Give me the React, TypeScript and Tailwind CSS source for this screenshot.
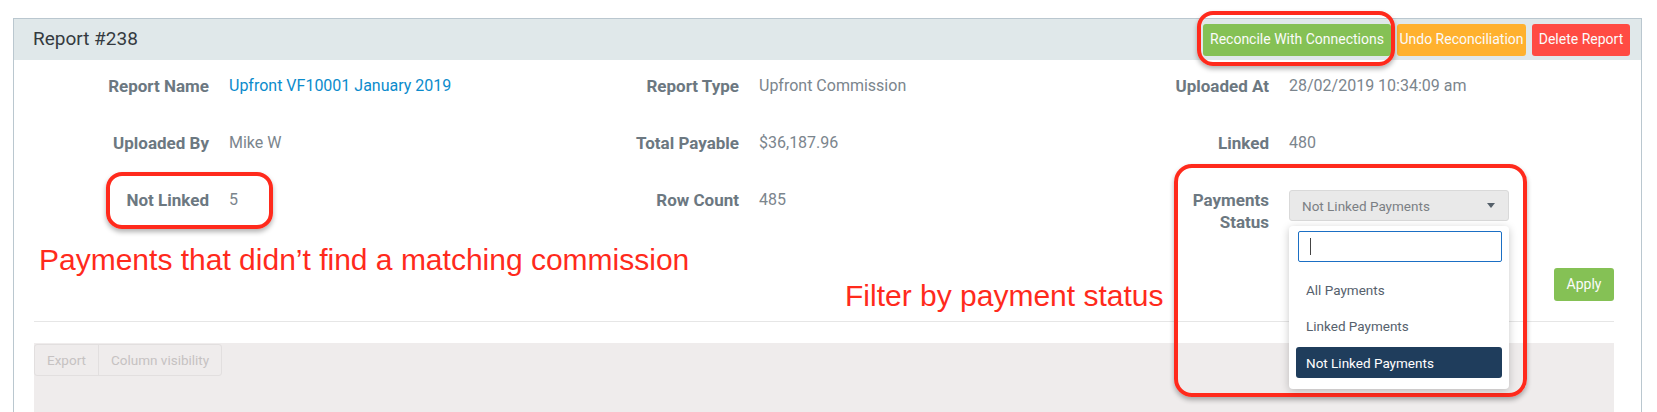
import React from 'react';

const details = [
  { label: 'Report Name', value: 'Upfront VF10001 January 2019', link: true },
  { label: 'Report Type', value: 'Upfront Commission' },
  { label: 'Uploaded At', value: '28/02/2019 10:34:09 am' },
  { label: 'Uploaded By', value: 'Mike W' },
  { label: 'Total Payable', value: '$36,187.96' },
  { label: 'Linked', value: '480' },
  { label: 'Not Linked', value: '5' },
  { label: 'Row Count', value: '485' },
];

const options = ['All Payments', 'Linked Payments'];

const App = () => {
  return (
    <div className="relative h-[412px] w-full overflow-hidden bg-white pl-[13px] pt-[18px] font-['Roboto',sans-serif]">
      <div className="h-[420px] w-[1629px] border border-b-0 border-[#bac7cf]">
        {/* header */}
        <div className="flex h-[41px] items-center justify-between bg-[#e0e8ea] pl-[19px] pr-[11px]">
          <h1 className="text-[19px] text-[#343a40]">Report #238</h1>
          <div className="flex items-center gap-[6px] text-[14px] font-normal text-[#fbfbfb]">
            <button className="h-[32px] w-[188px] rounded-[3px] bg-[#85c155]">Reconcile With Connections</button>
            <button className="h-[32px] w-[129px] rounded-[3px] bg-[#ffb12e]">Undo Reconciliation</button>
            <button className="h-[32px] w-[98px] rounded-[3px] bg-[#ff4b43]">Delete Report</button>
          </div>
        </div>

        {/* body */}
        <div className="pl-[20px] pr-[27px] pt-[15px]">
          <div className="grid grid-cols-[530px_530px_1fr] gap-y-[35px] text-[16px] leading-[22px]">
            {details.map((d) => (
              <div key={d.label} className="flex">
                <div className="w-[175px] shrink-0 text-right text-[17px] font-bold text-[#6c7881]">{d.label}</div>
                <div className={`ml-[20px] ${d.link ? 'text-[#0b8bcc]' : 'text-[#7b858d]'}`}>{d.value}</div>
              </div>
            ))}
            <div className="flex">
              <div className="w-[175px] shrink-0 text-right text-[17px] font-bold text-[#6c7881]">
                Payments
                <br />
                Status
              </div>
              <div className="relative ml-[20px] mt-[1px]">
                <div className="flex h-[31px] w-[220px] items-center justify-between rounded-[3px] border border-[#d9d9d9] bg-[#e9e9e9] pl-[12px] pr-[13px] text-[13.5px] text-[#7b7f84]">
                  <span>Not Linked Payments</span>
                  <svg width="8" height="5" viewBox="0 0 8 5">
                    <path d="M0 0 L8 0 L4 5 Z" fill="#55606a" />
                  </svg>
                </div>
                {/* open dropdown */}
                <div className="absolute left-0 top-[36px] z-20 w-[220px] rounded-[4px] bg-white pb-[11px] pl-[9px] pr-[7px] pt-[5px] shadow-[0_2px_8px_rgba(0,0,0,0.22)]">
                  <div className="flex h-[31px] items-center rounded-[2px] border border-[#1b6fc4] px-[11px]">
                    <div className="h-[17px] w-[1px] bg-[#444]" />
                  </div>
                  <div className="mt-[10px] text-[13.5px] text-[#56616d]">
                    {options.map((o) => (
                      <div key={o} className="flex h-[36px] items-center pl-[8px]">{o}</div>
                    ))}
                    <div className="-ml-[2px] mt-[3px] flex h-[31px] items-center rounded-[3px] bg-[#1f3d5c] pl-[10px] text-white">
                      Not Linked Payments
                    </div>
                  </div>
                </div>
              </div>
            </div>
          </div>

          <div className="mt-[35px] flex justify-end">
            <button className="h-[33px] w-[60px] rounded-[3px] bg-[#85c155] text-[14px] text-[#fbfbfb]">Apply</button>
          </div>

          <div className="mt-[20px] border-t border-[#e6e6e6]" />

          <div className="mt-[21px] h-[80px] bg-[#efecec] pt-[1px]">
            <div className="flex h-[32px] w-fit rounded-[3px] border border-[#e2dfdf] text-[13.5px] text-[#c6c2c2]">
              <div className="flex items-center px-[12px]">Export</div>
              <div className="flex items-center border-l border-[#e2dfdf] px-[12px]">Column visibility</div>
            </div>
          </div>
        </div>
      </div>

      {/* annotations */}
      <div className="absolute left-[1197px] top-[11px] h-[55px] w-[198px] rounded-[16px] border-[4px] border-[#ff2a1c] shadow-[0_3px_5px_rgba(0,0,0,0.3)]" />
      <div className="absolute left-[106px] top-[172px] h-[57px] w-[167px] rounded-[16px] border-[4px] border-[#ff2a1c] shadow-[0_3px_5px_rgba(0,0,0,0.3)]" />
      <div className="absolute left-[1174px] top-[164px] h-[233px] w-[353px] rounded-[18px] border-[4px] border-[#ff2a1c] shadow-[0_3px_5px_rgba(0,0,0,0.3)]" />
      <div className="absolute left-[39px] top-[244px] text-[30px] leading-[32px] text-[#ff2a1c] font-['Liberation_Sans',sans-serif]">
        Payments that didn’t find a matching commission
      </div>
      <div className="absolute left-[845px] top-[280px] text-[30px] leading-[32px] text-[#ff2a1c] font-['Liberation_Sans',sans-serif]">
        Filter by payment status
      </div>
    </div>
  );
};

export default App;
